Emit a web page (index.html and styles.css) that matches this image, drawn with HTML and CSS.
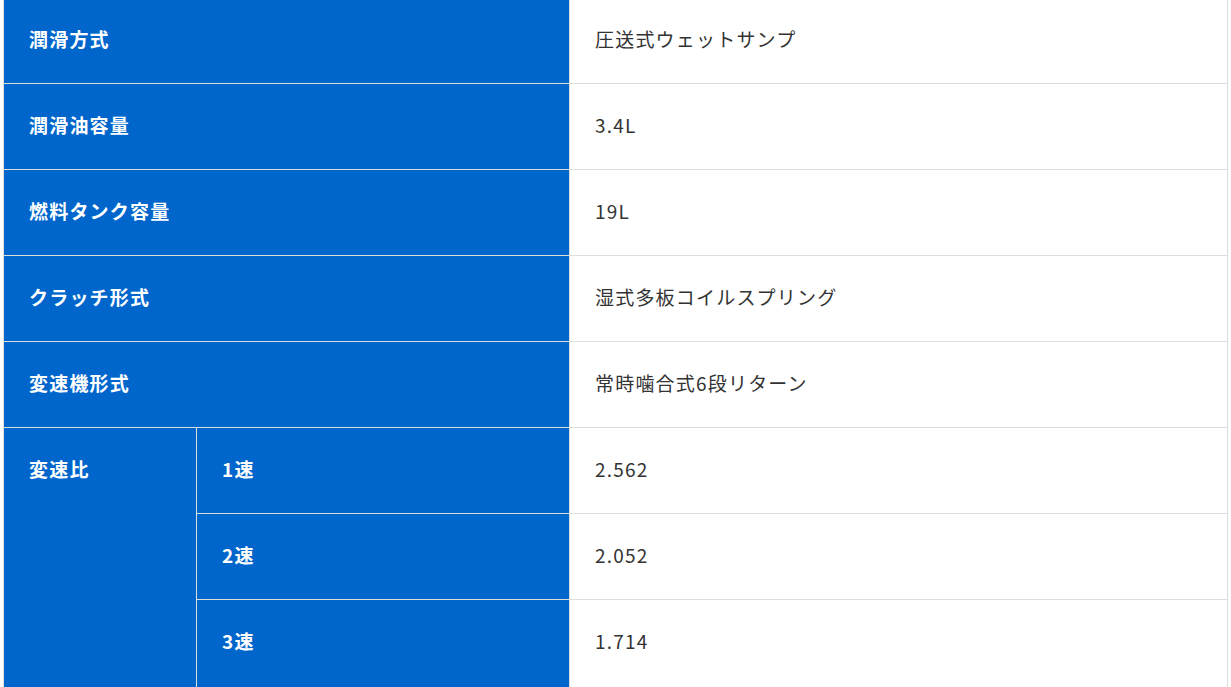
FILE: index.html
```html
<!DOCTYPE html>
<html lang="ja">
<head>
<meta charset="utf-8">
<title>仕様</title>
<link rel="stylesheet" href="styles.css">
</head>
<body>
<div class="wrap">
<table class="spec">
  <colgroup>
    <col class="c1"><col class="c2"><col class="c3">
  </colgroup>
  <tbody>
    <tr><th colspan="2">潤滑方式</th><td>圧送式ウェットサンプ</td></tr>
    <tr><th colspan="2">潤滑油容量</th><td>3.4L</td></tr>
    <tr><th colspan="2">燃料タンク容量</th><td>19L</td></tr>
    <tr><th colspan="2">クラッチ形式</th><td>湿式多板コイルスプリング</td></tr>
    <tr><th colspan="2">変速機形式</th><td>常時噛合式6段リターン</td></tr>
    <tr><th rowspan="3" class="top">変速比</th><th>1速</th><td>2.562</td></tr>
    <tr><th>2速</th><td>2.052</td></tr>
    <tr class="last"><th>3速</th><td>1.714</td></tr>
  </tbody>
</table>
</div>
</body>
</html>
```
FILE: styles.css
```css
html, body {
  margin: 0;
  padding: 0;
  background: #fff;
  overflow: hidden;
}
.wrap {
  padding-left: 3px;
  margin-top: -3px;
  height: 690px;
  overflow: hidden;
}
.spec {
  width: 1225px;
  border-collapse: collapse;
  table-layout: fixed;
  font-family: "Noto Sans CJK JP", "Noto Sans", sans-serif;
  font-size: 19px;
  letter-spacing: 1.2px;
  border: 1px solid #dddddd;
}
.c1 { width: 193px; }
.c2 { width: 373px; }
.c3 { width: auto; }
.spec th, .spec td {
  border: 1px solid #dddddd;
  padding: 28px 25px 32px;
  line-height: 25px;
  height: 25px;
  text-align: left;
  vertical-align: middle;
}
.spec th {
  background: #0066cc;
  color: #fff;
  font-weight: bold;
}
.spec td {
  color: #333;
  font-weight: normal;
}
.spec th.top {
  vertical-align: top;
}
.spec tr.last th, .spec tr.last td {
  padding-bottom: 40px;
}
```
